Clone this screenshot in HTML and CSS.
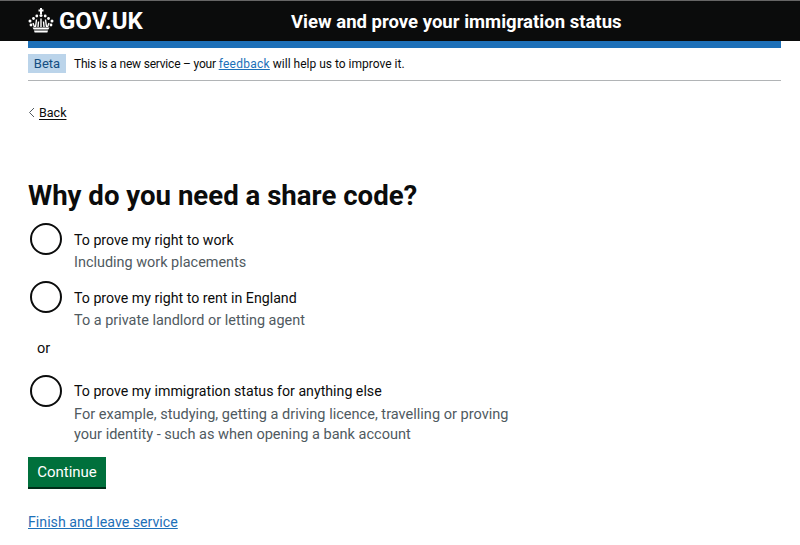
FILE: index.html
```html
<!DOCTYPE html>
<html lang="en">
<head>
<meta charset="utf-8">
<title>Why do you need a share code?</title>
<link rel="stylesheet" href="styles.css">
</head>
<body>
<header class="header">
  <div class="header-logo">
    <svg class="crown" width="26" height="25" viewBox="0 0 26 25" aria-hidden="true">
      <g fill="#fff">
        <rect x="12" y="0" width="2" height="6"/>
        <rect x="10.500" y="1.500" width="5" height="2"/>
        <circle cx="13" cy="7.500" r="1.500"/>
        <circle cx="8.800" cy="8" r="1.400"/><circle cx="17.200" cy="8" r="1.400"/>
        <circle cx="5.500" cy="10.500" r="1.400"/><circle cx="20.500" cy="10.500" r="1.400"/>
        <circle cx="2" cy="13" r="1.500"/><circle cx="24" cy="13" r="1.500"/>
        <circle cx="3" cy="17" r="1.400"/><circle cx="23" cy="17" r="1.400"/>
      </g>
      <g fill="none" stroke="#fff" stroke-width="1.400">
        <path d="M8.500 11.500 7.500 19M13 10.500V19M17.500 11.500 18.500 19M5 15l1.500 4M21 15l-1.500 4M10.500 13.500 10 19M15.500 13.500 16 19"/>
      </g>
      <path fill="#fff" d="M4.500 19.500h17l-1.200 2h-14.600zM6 22.500h14l-.6 2H6.600z"/>
    </svg>
    <span class="logotype">GOV.UK</span>
  </div>
  <div class="service-name">View and prove your immigration status</div>
</header>
<div class="width-container">
  <div class="blue-bar"></div>
  <div class="phase-banner">
    <strong class="tag">Beta</strong>
    <span><span class="phase-lead">This is a new service – your </span><a href="#" class="link phase-link">feedback</a> will help us to improve it.</span>
  </div>
  <a href="#" class="back"><svg class="chevron" width="7" height="11" viewBox="0 0 7 11" aria-hidden="true"><path d="M6 1 1.500 5.500 6 10" fill="none" stroke="#505a5f" stroke-width="1"/></svg><span class="back-text">Back</span></a>
  <main>
    <h1 class="heading">Why do you need a share code?</h1>
    <div class="radio">
      <span class="radio-circle"></span>
      <div class="radio-body">
        <div class="radio-label">To prove my right to work</div>
        <div class="radio-hint">Including work placements</div>
      </div>
    </div>
    <div class="radio">
      <span class="radio-circle"></span>
      <div class="radio-body">
        <div class="radio-label">To prove my right to rent in England</div>
        <div class="radio-hint">To a private landlord or letting agent</div>
      </div>
    </div>
    <div class="divider">or</div>
    <div class="radio radio-long">
      <span class="radio-circle"></span>
      <div class="radio-body">
        <div class="radio-label">To prove my immigration status for anything else</div>
        <div class="radio-hint">For example, studying, getting a driving licence, travelling or proving<br>your identity - such as when opening a bank account</div>
      </div>
    </div>
    <button class="button" type="button">Continue</button>
    <a href="#" class="link finish">Finish and leave service</a>
  </main>
</div>
</body>
</html>
```
FILE: styles.css
```css
html, body { margin: 0; padding: 0; background: #fff; overflow: hidden; }
body { font-family: Roboto, "Liberation Sans", sans-serif; color: #0b0c0c; font-size: 15px; height: 545px; }
.header { box-sizing: border-box; height: 41px; background: #0b0c0c; border-top: 1px solid #666; display: flex; align-items: center; padding: 0 0 0 28px; color: #fff; }
.header-logo { display: flex; align-items: center; gap: 5px; width: 263px; }
.crown { display: block; margin-top: -1px; }
.logotype { font-size: 24px; font-weight: 700; line-height: 1; }
.service-name { font-size: 18.550px; font-weight: 700; padding-top: 1px; }
.width-container { width: 753px; margin-left: 28px; }
.blue-bar { height: 7px; background: #1d70b8; }
.phase-banner { box-sizing: border-box; height: 33px; display: flex; align-items: center; gap: 8px; border-bottom: 1px solid #b1b4b6; font-size: 12px; padding-bottom: 1px; }
.phase-lead { letter-spacing: -0.2px; }
.phase-link { letter-spacing: 0.25px; }
.tag { background: #bbd4ea; color: #144e81; font-weight: 400; font-size: 13px; width: 38px; height: 19px; display: flex; align-items: center; justify-content: center; }
.link { color: #1d70b8; text-decoration: underline; }
.back { display: flex; align-items: center; gap: 4px; margin-top: 22px; height: 18px; color: #0b0c0c; text-decoration: none; font-size: 12.500px; }
.chevron { display: block; }
.back-text { text-decoration: underline; text-decoration-thickness: 1px; text-underline-offset: 2px; }
.heading { margin: 57px 0 0; font-size: 27.600px; line-height: 36px; font-weight: 700; }
.radio { display: flex; margin-top: 8px; }
.radio + .radio { margin-top: 7px; }
.radio-circle { box-sizing: border-box; flex: none; width: 32px; height: 32px; border: 2px solid #0b0c0c; border-radius: 50%; margin: 1px 0 0 2px; }
.radio-body { margin-left: 12px; }
.radio-label { font-size: 14.200px; line-height: 20px; margin-top: 8px; }
.radio-hint { font-size: 14.450px; line-height: 20px; color: #505a5f; margin-top: 3px; }
.divider { font-size: 14.500px; line-height: 20px; margin: 8px 0 0 9px; }
.radio.radio-long { margin-top: 15px; }
.radio-long .radio-label { margin-top: 7px; }
.radio-long .radio-hint { margin-top: 4px; font-size: 14.550px; }
.button { display: block; margin-top: 12px; width: 78px; height: 30px; border: 0; background: #00703c; box-shadow: 0 2px 0 #002d18; color: #fff; font: 400 15px Roboto, "Liberation Sans", sans-serif; padding: 0; }
.finish { display: inline-block; margin-top: 25px; font-size: 14.200px; line-height: 20px; }
```
